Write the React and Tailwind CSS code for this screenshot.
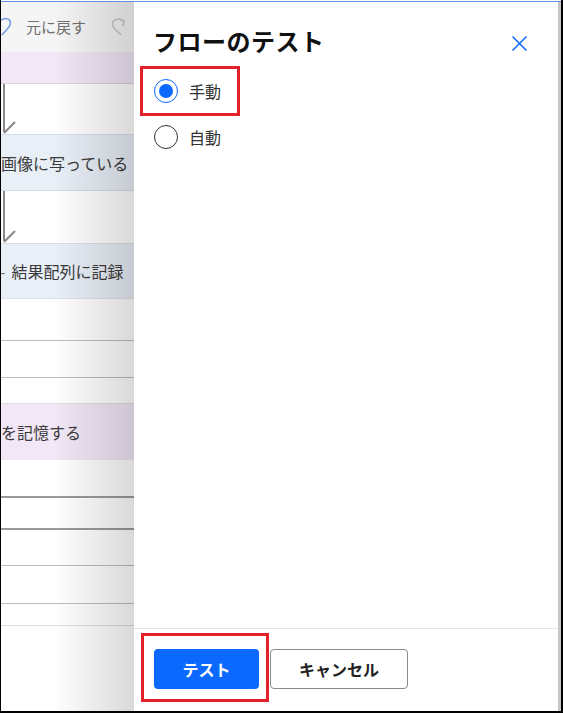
import React, { useState } from 'react'

const jp = { fontFamily: '"Noto Sans CJK JP", "Noto Sans", sans-serif' }

function Arrow(){
  return (
    <div className="relative h-full">
      <div className="absolute left-[2px] top-0 bottom-[2px] w-[2px] bg-[#8a8a8a]" />
      <svg className="absolute left-0 bottom-0" width="16" height="14" viewBox="0 0 16 14">
        <path d="M3 13 L14 2" stroke="#8a8a8a" strokeWidth="2.2" fill="none" />
      </svg>
    </div>
  )
}

function Radio({ checked }){
  return checked ? (
    <span className="w-[24px] h-[24px] rounded-full border-[1.5px] border-[#0b69ff] flex items-center justify-center">
      <span className="w-[14px] h-[14px] rounded-full bg-[#0b69ff]" />
    </span>
  ) : (
    <span className="w-[24px] h-[24px] rounded-full border-[1.5px] border-[#333]" />
  )
}

export default function App(){
  const [mode, setMode] = useState('manual')

  return (
    <div className="w-[563px] h-[713px] bg-white border-l border-r-2 border-b-2 border-black flex flex-col overflow-hidden" style={jp}>
      <div className="h-px bg-white" />
      <div className="h-px bg-[#5b95e6]" />
      <div className="flex flex-1 min-h-0">
        {/* Flow designer behind the drawer */}
        <div className="relative w-[133px] flex flex-col overflow-hidden text-[16px] text-[#3a3a3a]">
          <div className="h-[50px] bg-[#f5f5f5] flex items-center">
            <svg width="14" height="22" viewBox="0 0 14 22" className="-ml-[2px]">
              <path d="M1 5 C6 0, 13 3, 11 9 C10 12, 6 15, 3 19" stroke="#6d9ae6" strokeWidth="1.5" fill="none" />
            </svg>
            <span className="ml-[13px] text-[15px] text-[#707070]">元に戻す</span>
            <svg width="18" height="22" viewBox="0 0 18 22" className="ml-[24px]">
              <path d="M13 5 C8 1, 1 4, 3 10 C4 13, 8 16, 11 19" stroke="#c4c4c4" strokeWidth="1.4" fill="none" />
              <path d="M9 3 L14 5 L13 10" stroke="#c4c4c4" strokeWidth="1.4" fill="none" />
            </svg>
          </div>
          <div className="h-[32px] bg-[#f1e7f6] border-b border-[#d9d0de]" />
          <div className="h-[50px]"><Arrow /></div>
          <div className="h-[56px] bg-[#e9eff7] border-t border-[#d6dde6] flex items-center whitespace-nowrap">画像に写っている</div>
          <div className="h-[53px] border-t border-[#d6dde6]"><Arrow /></div>
          <div className="h-[55px] bg-[#e9eff7] border-t border-[#d6dde6] flex items-center whitespace-nowrap">
            <span className="text-[#777] -ml-[1px]">-</span>
            <span className="ml-[6px]">結果配列に記録</span>
          </div>
          <div className="h-[42px] border-t border-[#e2e2e2]" />
          <div className="h-[37px] border-t border-[#bdbdbd]" />
          <div className="h-[26px] border-t border-[#bdbdbd]" />
          <div className="h-[57px] bg-[#f1e7f6] border-t border-[#e0e0e0] flex items-center whitespace-nowrap">を記憶する</div>
          <div className="h-[36px]" />
          <div className="h-[32px] border-t-2 border-[#9a9a9a]" />
          <div className="h-[37px] border-t-2 border-[#9a9a9a]" />
          <div className="h-[38px] border-t border-[#bdbdbd]" />
          <div className="h-[22px] border-t border-[#bdbdbd]" />
          <div className="flex-1 border-t border-[#dcdcdc]" />
          <div className="absolute inset-y-0 right-0 w-[80px] bg-gradient-to-r from-transparent to-black/15 pointer-events-none" />
        </div>

        {/* Test flow drawer */}
        <div className="w-[424px] flex flex-col bg-white">
          <div className="flex items-start justify-between pl-[19px] pr-[30px] pt-[23px]">
            <h1 className="text-[24px] font-bold text-[#111] leading-[32px] tracking-[0.5px]">フローのテスト</h1>
            <button className="mt-[10px]" aria-label="閉じる">
              <svg width="17" height="17" viewBox="0 0 17 17">
                <path d="M1.5 1.5 L15.5 15.5 M15.5 1.5 L1.5 15.5" stroke="#0b69ff" strokeWidth="1.5" />
              </svg>
            </button>
          </div>

          <div className="pl-[6px] mt-[9px] flex flex-col">
            <div className="w-[100px] h-[50px] border-[3px] border-[#e5202b] flex items-center pl-[11px]">
              <button onClick={() => setMode('manual')} className="flex items-center gap-[11px] text-[16px] text-[#333]">
                <Radio checked={mode === 'manual'} />
                手動
              </button>
            </div>
            <div className="h-[42px] flex items-center pl-[14px]">
              <button onClick={() => setMode('auto')} className="flex items-center gap-[11px] text-[16px] text-[#333]">
                <Radio checked={mode === 'auto'} />
                自動
              </button>
            </div>
          </div>

          <div className="flex-1" />

          <div className="h-[83px] border-t border-[#e3e3e3] flex items-start pl-[7px] pt-[4px]">
            <div className="border-[3px] border-[#e5202b] pl-[10px] pr-[7px] pt-[13px] pb-[10px]">
              <button className="w-[105px] h-[40px] rounded-[4px] bg-[#0b69ff] text-white text-[16px] font-bold">テスト</button>
            </div>
            <button className="ml-px mt-[16px] w-[138px] h-[40px] rounded-[4px] border border-[#8a8a8a] bg-white text-[#222] text-[16px] font-bold">キャンセル</button>
          </div>
        </div>

        <div className="w-[3px] bg-[#c6c6c6]" />
      </div>
    </div>
  )
}
